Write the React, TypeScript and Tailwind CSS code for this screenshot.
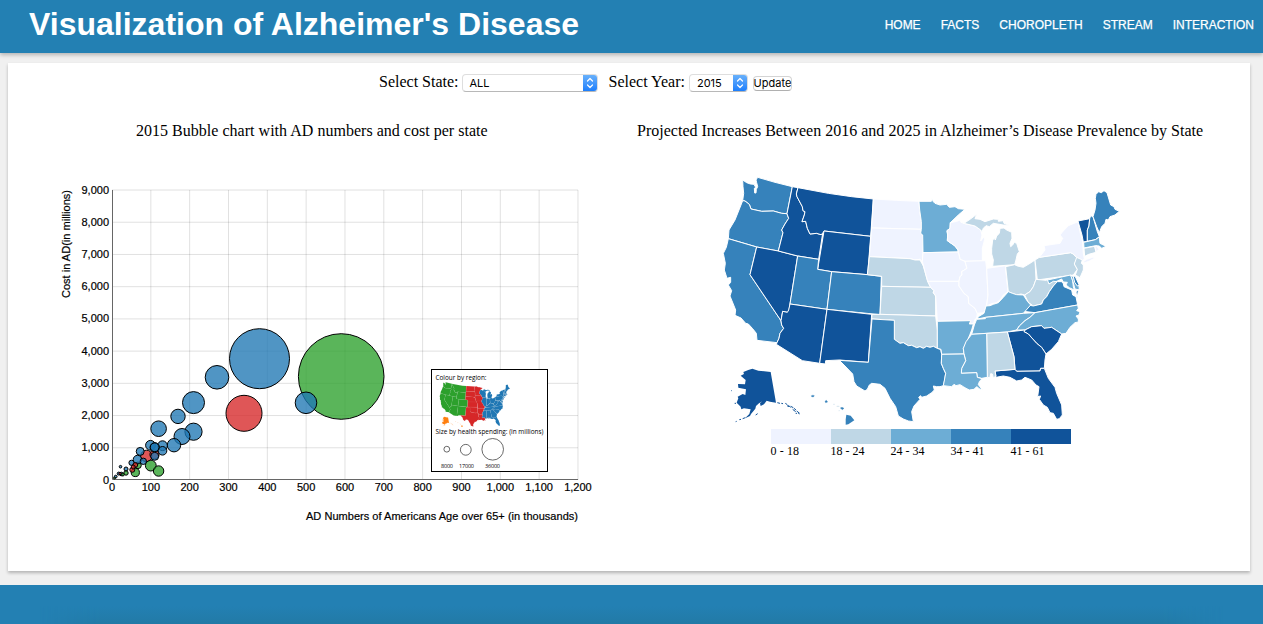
import React from "react";

type Region = "west" | "mid" | "east" | "other";
type Shape = { level: number; region: Region; dx: number; dy: number; pts: string };

const LEVELS = ["#eff3ff", "#bfd7e6", "#6dadd5", "#3682bb", "#10539a"];
const REGION_COLOR: Record<Region, string> = { west: "#2ca02c", mid: "#d62728", east: "#1f77b4", other: "#ff7f0e" };

const w = (level: number, pts: string, region: Region = "west"): Shape => ({ level, region, dx: 0, dy: 0, pts });
const m = (level: number, pts: string, region: Region = "mid"): Shape => ({ level, region, dx: 435, dy: 30, pts });
const n = (level: number, pts: string): Shape => ({ level, region: "east", dx: 795, dy: 30, pts });
const s = (level: number, pts: string, region: Region = "east"): Shape => ({ level, region, dx: 735, dy: 360, pts });
const b = (level: number, pts: string, region: Region = "other"): Shape => ({ level, region, dx: 15, dy: 540, pts });

const STATES: Shape[] = [
  w(3, "83,30 95,38 106,42 117,43 122,52 118,55 119,69 123,69 124,58 128,50 125,38 123,30 128,22 180,37 232,50 216,131 200,130 175,123 140,124 108,117 103,103 90,93 83,92 86,70 84,50"),
  w(3, "83,92 90,93 103,103 108,117 140,124 175,123 200,130 216,131 221,145 210,162 200,180 204,188 190,243 125,231 40,206 42,180 60,150 72,120"),
  w(3, "40,206 125,231 105,314 198,452 200,465 206,475 195,490 192,505 186,518 126,511 124,490 112,475 100,462 92,460 78,444 60,436 62,420 45,378 50,362 40,345 47,337 47,322 36,325 28,300 31,280 25,250 34,232"),
  w(4, "125,231 190,243 248,258 225,402 221,427 217,427 203,424 198,452 105,314"),
  w(4, "232,50 249,53 244,72 246,80 262,110 264,122 270,125 268,135 261,155 272,154 277,175 285,192 305,190 318,194 323,190 311,268 248,258 190,243 204,188 200,180 210,162 221,145 216,131"),
  w(4, "249,53 340,70 410,80 475,87 467,199 327,183 323,190 318,194 305,190 285,192 277,175 272,154 261,155 268,135 270,125 264,122 262,110 246,80 244,72"),
  w(4, "327,183 467,199 458,314 350,305 308,298"),
  w(3, "248,258 311,268 308,298 350,305 336,418 225,402"),
  w(3, "350,305 458,314 499,319 495,434 336,418"),
  w(4, "225,402 336,418 314,580 262,572 184,523 186,518 192,505 195,490 206,475 200,465 198,452 203,424 217,427 221,420"),
  w(4, "336,418 470,433 460,577 373,570 332,572 331,582 314,580"),
  m(0, "40,57 110,61 177,64 179,90 184,125 184,148 35,144"),
  m(0, "35,144 184,148 182,160 188,165 189,218 187,245 180,238 165,240 150,236 28,230"),
  m(1, "28,230 150,236 165,240 180,240 190,258 195,275 203,304 212,322 65,319 65,289 22,284"),
  m(1, "65,319 212,322 222,332 220,338 227,348 227,408 60,403"),
  m(1, "36,403 60,403 227,408 232,450 232,505 220,499 210,502 200,499 190,505 180,500 170,503 155,496 145,497 130,488 120,490 103,478 103,421 35,417"),
  b(3, "456,-93 523,-89 523,-32 540,-20 550,-22 565,-13 575,-14 590,-7 600,-10 610,-5 620,-11 630,-8 640,-11 652,-5 662,-2 665,13 664,40 670,55 677,70 674,90 670,107 660,110 650,110 640,108 643,120 635,128 620,138 605,142 602,137 596,142 600,148 582,168 575,185 580,215 565,213 550,207 535,198 527,170 510,145 495,115 480,103 455,100 448,105 442,118 435,123 410,108 402,95 398,72 375,48 358,31 445,37", "mid"),
  m(2, "177,64 214,64 215,54 220,65 225,70 240,75 260,73 268,82 285,80 295,86 315,88 295,105 271,128 270,145 261,152 263,165 262,182 285,198 294,210 294,216 189,218 188,165 182,160 184,148 184,125 179,90"),
  m(0, "271,128 290,124 300,120 303,127 312,130 345,138 362,150 366,165 362,183 372,170 374,178 367,205 367,243 315,244 300,238 298,228 294,210 285,198 262,182 263,165 261,152 270,145", "east"),
  m(1, "312,130 330,118 350,103 345,116 360,118 375,125 400,117 415,118 415,124 430,122 432,130 448,136 430,135 400,130 388,140 378,137 370,145 366,155 362,150 345,138", "east"),
  m(0, "189,218 294,216 298,228 300,238 315,244 321,265 305,275 306,285 300,290 297,304 203,304 195,275 187,245"),
  m(0, "203,304 297,304 297,318 312,340 325,350 326,370 345,385 352,400 350,415 345,418 340,432 328,432 332,422 232,424 227,348 220,338 222,332 212,322"),
  m(0, "315,244 377,242 380,265 384,345 380,375 372,398 352,400 345,385 326,370 325,350 312,340 297,318 297,304 300,290 306,285 305,275 321,265", "east"),
  m(0, "380,265 436,257 444,335 430,345 422,358 410,368 395,371 380,378 384,345", "east"),
  m(2, "232,424 332,422 328,432 340,432 335,450 330,463 325,475 318,490 310,505 312,522 245,523 243,508 232,505"),
  n(1, "60,145 72,144 80,150 95,157 96,175 90,190 92,200 98,195 103,187 110,190 118,215 112,222 108,240 104,254 78,256 38,259 40,240 35,222 35,205 38,180 43,175 46,180 50,168 58,160"),
  n(1, "77,260 104,254 112,258 130,262 150,250 165,240 168,298 160,320 150,335 134,345 123,342 110,345 97,340 85,335"),
  n(1, "165,240 178,232 272,218 280,222 292,235 283,252 292,268 280,285 172,300"),
  n(0, "178,232 195,210 192,197 225,192 240,190 248,175 240,165 248,155 265,137 294,125 300,155 308,185 310,220 313,236 308,243 292,235 280,222 272,218"),
  n(0, "310,245 320,238 340,231 343,235 327,244 312,249"),
  n(1, "290,232 307,240 304,250 310,255 310,270 300,293 286,285 292,268 283,252"),
  n(4, "294,123 329,116 327,138 322,150 322,184 310,186 306,165"),
  n(3, "329,116 332,107 339,110 352,155 358,170 346,179 322,184 322,150 327,138"),
  n(3, "339,110 345,90 348,70 346,55 348,43 356,35 364,38 372,32 381,38 392,75 402,80 405,88 418,94 405,105 390,110 385,120 378,118 375,130 365,140 358,158 350,140"),
  n(2, "311,187 346,179 358,171 360,190 370,195 377,200 365,205 358,198 347,197 312,204"),
  n(1, "312,205 344,199 348,217 326,223 314,229"),
  n(0, "344,199 350,198 357,208 349,216"),
  n(2, "198,301 272,285 278,302 280,320 283,330 268,323 258,315 262,307 250,306 245,297 230,304 207,312"),
  n(2, "272,285 280,290 285,305 297,318 298,330 285,327 279,305"),
  n(3, "280,290 285,288 298,316 292,318 284,307"),
  n(1, "168,298 198,301 202,299 207,312 220,304 232,305 220,318 208,335 200,350 190,360 185,372 160,378 145,367 134,345 150,335 160,320"),
  n(3, "130,394 150,376 160,378 185,372 190,360 200,350 208,335 220,318 232,305 245,305 250,311 252,320 275,330 278,345 288,350 293,375 165,398"),
  n(3, "288,335 296,328 291,355"),
  s(2, "55,80 72,70 78,48 90,47 100,43 115,38 130,22 145,5 157,10 170,14 190,15 203,35 212,45 190,70 77,82 52,87"),
  s(2, "50,88 76,86 77,82 190,70 225,68 210,82 195,92 178,108 170,120 142,126 35,133 43,105"),
  s(2, "225,68 353,45 355,55 350,62 360,65 357,75 348,78 355,87 355,96 345,98 330,112 318,130 305,132 275,112 252,115 245,107 215,110 195,120 170,120 178,108 195,92 210,82"),
  s(4, "195,120 215,110 245,107 252,115 275,112 305,132 295,155 275,178 258,192 245,172 230,160 205,132 192,125"),
  s(4, "142,126 195,120 192,125 205,132 230,160 245,172 258,192 255,210 253,235 242,235 240,243 170,244 165,238 162,200"),
  s(4, "105,243 165,238 170,244 240,243 242,235 253,235 265,265 285,292 290,310 305,345 307,375 298,386 290,388 280,370 270,368 262,352 250,345 238,328 242,318 233,320 237,290 228,285 215,270 195,262 185,270 170,273 150,262 130,258 108,262"),
  s(1, "80,130 142,126 162,200 165,238 105,243 108,258 100,264 97,252 92,251 90,263 82,262"),
  s(2, "35,133 80,130 82,262 65,265 52,262 50,248 4,250 5,235 17,212 12,192 10,175 18,155"),
  s(2, "-55,193 12,192 17,212 5,235 4,250 50,248 52,262 66,266 58,275 55,284 68,300 58,296 50,290 42,298 28,300 18,295 10,290 0,284 -12,287 -18,283 -25,290 -50,287 -43,250 -50,235 -56,220", "mid"),
  b(4, "62,77 72,72 70,66 85,60 97,56 115,62 152,66 168,158 150,155 140,152 132,163 122,168 120,160 127,154 117,160 108,168 106,176 93,192 90,198 75,205 88,192 92,178 72,175 64,178 62,170 50,158 55,145 53,140 68,132 76,135 78,118 55,113 54,102 75,103 77,90"),
  b(3, "379,194 392,197 403,211 385,223 377,224 377,209"),
];

const ALASKA_TAIL = "M172 158l8 2M184 160l5 1M196 160l6 4M205 166l7 6M201 167l6 3M212 169l8 4M222 175l6 5M218 178l9 7M230 183l9 7M234 188l4 4M227 190h4M68 206l8-3M58 209l5-1M47 215l3-1M44 160h4M107 195l6-4M34 122h2";
const HAWAII_ISLANDS = "M274 137q5-3 9 0l-3 4-5-1zM315 154l4-3 4 5-6 2zM361 174l5-2 6 3-5 4z";

function StateShapes({ byRegion = false }: { byRegion?: boolean }) {
  return (
    <>
      {STATES.map((st, i) => (
        <polygon
          key={i}
          points={st.pts}
          transform={`translate(${st.dx} ${st.dy})`}
          fill={byRegion ? REGION_COLOR[st.region] : LEVELS[st.level]}
          stroke={byRegion ? "#ddd" : "#fff"}
          strokeOpacity={byRegion ? 0.28 : 1}
          strokeWidth={st.region === "other" ? 0 : 3}
          strokeLinejoin="round"
        />
      ))}
      <g transform="translate(15 540)">
        <path d={ALASKA_TAIL} fill="none" stroke={byRegion ? REGION_COLOR.other : LEVELS[4]} strokeWidth="3" />
        <path d={HAWAII_ISLANDS} fill={byRegion ? REGION_COLOR.other : LEVELS[3]} stroke={byRegion ? REGION_COLOR.other : LEVELS[3]} />
        <path d="M340 163h4M350 169h8M356 182h3" stroke={byRegion ? REGION_COLOR.other : LEVELS[1]} strokeWidth="2" />
      </g>
    </>
  );
}

const BLUE = "#1f77b4";
const GREEN = "#2ca02c";
const RED = "#d62728";
const BUBBLES: [number, number, number, string][] = [
  [341.2, 376.5, 42.8, GREEN],
  [259.5, 358.7, 30, BLUE],
  [244, 413.3, 18, RED],
  [217, 377.3, 11.8, BLUE],
  [306, 402.8, 10.8, BLUE],
  [193.5, 402.6, 11, BLUE],
  [193.5, 431.7, 8.6, BLUE],
  [182, 436.5, 8, BLUE],
  [158.6, 428.7, 7.8, BLUE],
  [178, 416.4, 7.2, BLUE],
  [174, 445.2, 6.7, BLUE],
  [146.4, 456, 5.8, RED],
  [154.5, 454.5, 4.6, RED],
  [150.8, 465.6, 5.4, GREEN],
  [158.6, 471, 5.2, GREEN],
  [150.5, 445.3, 4.9, BLUE],
  [162.5, 445.7, 4.9, BLUE],
  [154.7, 447.3, 4.6, BLUE],
  [154.7, 447.3, 4.4, BLUE],
  [162.5, 450.8, 4.3, BLUE],
  [154.7, 456.3, 4, BLUE],
  [140.2, 451.4, 4, BLUE],
  [138, 465.3, 3.3, GREEN],
  [135.3, 472.5, 4.1, GREEN],
  [137.5, 459.6, 4.3, BLUE],
  [143.3, 461.3, 3.2, BLUE],
  [131.5, 462.8, 2.6, BLUE],
  [135.3, 465, 2.4, RED],
  [132.3, 469.8, 2.5, RED],
  [133.2, 467, 2, RED],
  [126, 469, 2, BLUE],
  [126, 473, 2.2, GREEN],
  [120.5, 466.7, 1.3, BLUE],
  [118.7, 473.6, 1.5, BLUE],
  [121.3, 474, 1.8, BLUE],
  [122.8, 474.5, 1.5, GREEN],
  [120, 473.5, 1.2, RED],
  [115.7, 476.6, 1.4, BLUE],
  [114.5, 478, 1, GREEN],
];

const X_STEP = 38.83;
const Y_STEP = 32.22;

function BubbleChart() {
  return (
    <svg viewBox="50 150 550 390" className="block h-[390px] w-[550px] font-['Liberation_Sans',Arial,sans-serif] text-[11px]">
      <g stroke="#000" strokeOpacity="0.12" strokeWidth="1">
        {Array.from({ length: 12 }, (_, i) => (
          <line key={i} x1={112 + (i + 1) * X_STEP} x2={112 + (i + 1) * X_STEP} y1="190" y2="480" />
        ))}
        {Array.from({ length: 9 }, (_, i) => (
          <line key={i} x1="112" x2="578" y1={480 - (i + 1) * Y_STEP} y2={480 - (i + 1) * Y_STEP} />
        ))}
      </g>
      <path d="M112.5 190V479.5H578" fill="none" stroke="#666" />
      <g stroke="#000" strokeWidth="0.2">
        {Array.from({ length: 13 }, (_, i) => (
          <text key={i} x={112 + i * X_STEP} y="491" textAnchor="middle">
            {(i * 100).toLocaleString("en-US")}
          </text>
        ))}
        {Array.from({ length: 10 }, (_, i) => (
          <text key={i} x="109" y={483.5 - i * Y_STEP} textAnchor="end">
            {(i * 1000).toLocaleString("en-US")}
          </text>
        ))}
        <text x="578" y="520" textAnchor="end" textLength="272">AD Numbers of Americans Age over 65+ (in thousands)</text>
        <text transform="translate(70 190) rotate(-90)" textAnchor="end" textLength="108">Cost in AD(in millions)</text>
      </g>
      {BUBBLES.map(([cx, cy, r, fill], i) => (
        <circle key={i} cx={cx} cy={cy} r={r} fill={fill} fillOpacity="0.78" stroke="#000" strokeWidth="1" />
      ))}
      <g className="font-['Open_Sans',sans-serif] text-[7px] font-medium">
        <rect x="431.5" y="369.5" width="116" height="102" fill="#fff" stroke="#000" />
        <text x="435.5" y="379.5" textLength="51" lengthAdjust="spacingAndGlyphs">Colour by region:</text>
        <g transform="translate(438.2 380.8) scale(0.0592 0.0605)">
          <StateShapes byRegion />
        </g>
        <text x="435.5" y="434" textLength="108" lengthAdjust="spacingAndGlyphs">Size by health spending: (in millions)</text>
        <g fill="none" stroke="#444" strokeWidth="0.8">
          <circle cx="446.8" cy="449.2" r="2.9" />
          <circle cx="465.8" cy="449.8" r="5.4" />
          <circle cx="492.7" cy="449.3" r="10.8" />
        </g>
        <g className="text-[5.5px]">
          <text x="441" y="468" textLength="12">8000</text>
          <text x="459" y="468" textLength="15">17000</text>
          <text x="485" y="468" textLength="15">36000</text>
        </g>
      </g>
    </svg>
  );
}

function ChoroplethMap() {
  return (
    <svg viewBox="710 150 430 310" className="block h-[310px] w-[430px] font-['Liberation_Serif',serif] text-[12px]">
      <g transform="translate(715 170) scale(0.33333)">
        <StateShapes />
      </g>
      {["0 - 18", "18 - 24", "24 - 34", "34 - 41", "41 - 61"].map((label, i) => (
        <g key={label}>
          <rect x={771 + i * 60} y="429" width="60" height="15" fill={LEVELS[i]} />
          <text x={770.6 + i * 60} y="455" textLength={i === 0 ? 28.5 : 34}>{label}</text>
        </g>
      ))}
    </svg>
  );
}

function SelectBox({ value, width }: { value: string; width: string }) {
  return (
    <button className={`mt-[2px] flex h-[18px] ${width} items-center justify-between overflow-hidden rounded-[4px] border border-[#dedede] border-b-[#b8b8b8] bg-white pl-[7px] font-[Inter,sans-serif] text-[11px] leading-none text-black`}>
      <span>{value}</span>
      <span className="-my-px -mr-px flex h-[18px] w-[15px] items-center justify-center bg-linear-to-b from-[#6cb3fa] to-[#147bfc]">
        <svg viewBox="0 0 8 12" className="h-[12px] w-[8px]" fill="none" stroke="#fff" strokeWidth="1.2" strokeLinecap="round" strokeLinejoin="round">
          <path d="M1.5 4L4 1.5 6.5 4M1.5 8L4 10.5 6.5 8" />
        </svg>
      </span>
    </button>
  );
}

export default function App() {
  return (
    <div className="flex h-[624px] w-[1263px] flex-col overflow-hidden bg-[#f0f0f0] font-['Liberation_Serif',serif] text-black">
      <header className="z-10 flex h-[53px] shrink-0 items-center justify-between bg-[#2380b3] pr-[9px] pl-[29px] font-['Liberation_Sans',Arial,sans-serif] text-white shadow-[0_2px_4px_rgba(0,0,0,0.25)]">
        <h1 className="pb-[5px] text-[32px] leading-none font-bold whitespace-nowrap">Visualization of Alzheimer's Disease</h1>
        <nav className="flex gap-5 pb-[4px] text-[12px] leading-none whitespace-nowrap [-webkit-text-stroke:0.25px_white]">
          <a>HOME</a>
          <a>FACTS</a>
          <a>CHOROPLETH</a>
          <a>STREAM</a>
          <a>INTERACTION</a>
        </nav>
      </header>
      <main className="mt-[10px] ml-2 h-[508px] w-[1242px] shrink-0 bg-white shadow-[0_2px_3px_rgba(0,0,0,0.25)]">
        <div className="flex h-[38px] items-center pl-[371px] text-[16px] leading-none whitespace-nowrap">
          <span className="mr-[3px]">Select State:</span>
          <SelectBox value="ALL" width="w-[136px]" />
          <span className="mr-[4px] ml-[11px]">Select Year:</span>
          <SelectBox value="2015" width="w-[59px]" />
          <button className="mt-[2px] ml-[5px] flex h-[15px] w-[39px] items-center justify-center rounded-[4px] border border-[#d4d4d4] border-b-[#b0b0b0] bg-white font-[Inter,sans-serif] text-[11px] leading-none">Update</button>
        </div>
        <div className="flex pt-[21px]">
          <section className="w-[621px] shrink-0">
            <h2 className="h-[28px] pl-[128px] text-[16px] leading-[17px] whitespace-nowrap tracking-[0.02px]">2015 Bubble chart with AD numbers and cost per state</h2>
            <div className="pl-[42px]">
              <BubbleChart />
            </div>
          </section>
          <section className="w-[621px] shrink-0">
            <h2 className="h-[28px] pl-[8px] text-[16px] leading-[17px] whitespace-nowrap tracking-[0.01px]">Projected Increases Between 2016 and 2025 in Alzheimer’s Disease Prevalence by State</h2>
            <div className="pl-[81px]">
              <ChoroplethMap />
            </div>
          </section>
        </div>
      </main>
      <footer className="mt-[14px] flex h-[39px] shrink-0 flex-col justify-end bg-[#2380b3] px-[40px]">
        <div className="h-[18px] bg-linear-to-b from-[#2380b3] to-[#227aa6] mask-x-from-95%" />
      </footer>
    </div>
  );
}
